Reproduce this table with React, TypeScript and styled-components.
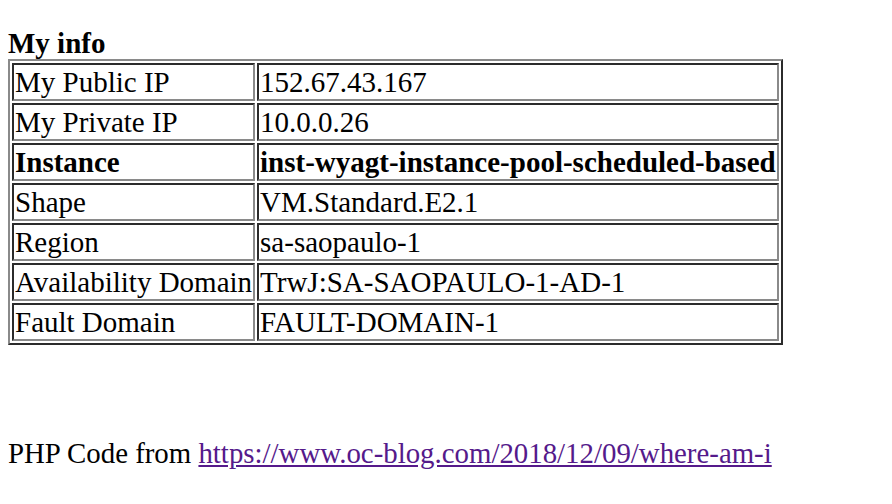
import React from "react";
import styled, { createGlobalStyle } from "styled-components";

const GlobalStyle = createGlobalStyle`
  html, body {
    margin: 0;
    background: #ffffff;
  }
  body {
    padding: 28px 8px 8px;
    font-family: "Liberation Serif", "Times New Roman", serif;
    font-size: 29px;
    color: #000000;
  }
`;

const LIGHT = "#8a8a8a";
const DARK = "#2b2b2b";

const Heading = styled.h3`
  margin: 0;
  font-size: 29px;
  line-height: 31px;
  font-weight: bold;
`;

const InfoTable = styled.table`
  border-collapse: separate;
  border-spacing: 2px;
  border-style: solid;
  border-width: 2px;
  border-color: ${LIGHT} ${DARK} ${DARK} ${LIGHT};
  font-size: 29px;
  line-height: 32px;
`;

const Cell = styled.td<{ $bold?: boolean }>`
  padding: 1px;
  border-style: solid;
  border-width: 2px;
  border-color: ${DARK} ${LIGHT} ${LIGHT} ${DARK};
  font-weight: ${({ $bold }) => ($bold ? "bold" : "normal")};
  white-space: nowrap;
  text-align: left;
  vertical-align: middle;
`;

const Footer = styled.p`
  margin: 92px 0 0;
  font-size: 28.85px;
  line-height: 32px;
`;

const Link = styled.a`
  color: #551a8b;
  text-decoration: underline;
`;

const rows: { label: string; value: string; bold?: boolean }[] = [
  { label: "My Public IP", value: "152.67.43.167" },
  { label: "My Private IP", value: "10.0.0.26" },
  { label: "Instance", value: "inst-wyagt-instance-pool-scheduled-based", bold: true },
  { label: "Shape", value: "VM.Standard.E2.1" },
  { label: "Region", value: "sa-saopaulo-1" },
  { label: "Availability Domain", value: "TrwJ:SA-SAOPAULO-1-AD-1" },
  { label: "Fault Domain", value: "FAULT-DOMAIN-1" },
];

const App = () => {
  return (
    <>
      <GlobalStyle />
      <Heading>My info</Heading>
      <InfoTable>
        <tbody>
          {rows.map((r) => (
            <tr key={r.label}>
              <Cell $bold={r.bold}>{r.label}</Cell>
              <Cell $bold={r.bold}>{r.value}</Cell>
            </tr>
          ))}
        </tbody>
      </InfoTable>
      <Footer>
        PHP Code from{" "}
        <Link href="#">https://www.oc-blog.com/2018/12/09/where-am-i</Link>
      </Footer>
    </>
  );
};

export default App;
